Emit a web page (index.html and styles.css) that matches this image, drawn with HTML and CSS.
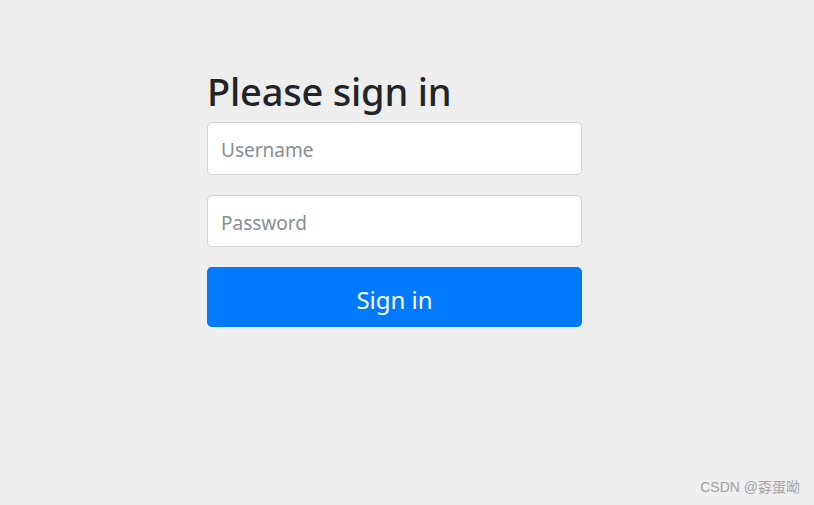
FILE: index.html
```html
<!DOCTYPE html>
<html lang="en">
<head>
  <meta charset="UTF-8" />
  <title>Please sign in</title>
  <meta name="viewport" content="width=device-width, initial-scale=1.0" />
  <link rel="stylesheet" href="styles.css">
</head>
<body>
  <div class="container">
    <form class="form-signin" method="post" action="/login">
      <h2 class="form-signin-heading">Please sign in</h2>
      <p class="field">
        <label for="username" class="sr-only">Username</label>
        <input type="text" id="username" name="username" class="form-control" placeholder="Username" />
      </p>
      <p class="field">
        <label for="password" class="sr-only">Password</label>
        <input type="password" id="password" name="password" class="form-control" placeholder="Password" />
      </p>
      <button class="btn-signin" type="submit">Sign in</button>
    </form>
  </div>

  <div class="watermark">CSDN @孬蛋呦</div>
</body>
</html>
```

FILE: styles.css
```css
body {
  margin: 0;
  font-family: "Noto Sans", "Open Sans", sans-serif;
  background-color: #eeeeee;
  height: 505px;
  overflow: hidden;
}

.container {
  padding-left: 207px;
  padding-top: 66px;
}

.form-signin {
  width: 375px;
}

.form-signin-heading {
  margin: 0 0 6px;
  font-size: 38px;
  font-weight: 500;
  line-height: 50px;
  color: #212529;
  letter-spacing: -0.2px;
}

.field {
  margin: 0 0 20px;
}

.sr-only {
  position: absolute;
  width: 1px;
  height: 1px;
  overflow: hidden;
  clip: rect(0, 0, 0, 0);
}

.form-control {
  display: block;
  width: 100%;
  box-sizing: border-box;
  padding: 13px 13px 10px;
  font-family: inherit;
  font-size: 19px;
  line-height: 28px;
  color: #495057;
  background-color: #fff;
  border: 1px solid #ced4da;
  border-radius: 5px;
  outline: none;
}

#password {
  padding-bottom: 9px;
}

.form-control::placeholder {
  color: #868e96;
  opacity: 1;
}

.btn-signin {
  display: block;
  width: 100%;
  height: 60px;
  padding: 4px 0 0;
  font-family: inherit;
  font-size: 24px;
  color: #fff;
  background-color: #007bff;
  border: none;
  border-radius: 5px;
  cursor: pointer;
}

.watermark {
  position: absolute;
  right: 14px;
  bottom: 9px;
  font-family: "Liberation Sans", "Noto Sans CJK SC", sans-serif;
  font-size: 14px;
  color: #a3a3a3;
}
```
